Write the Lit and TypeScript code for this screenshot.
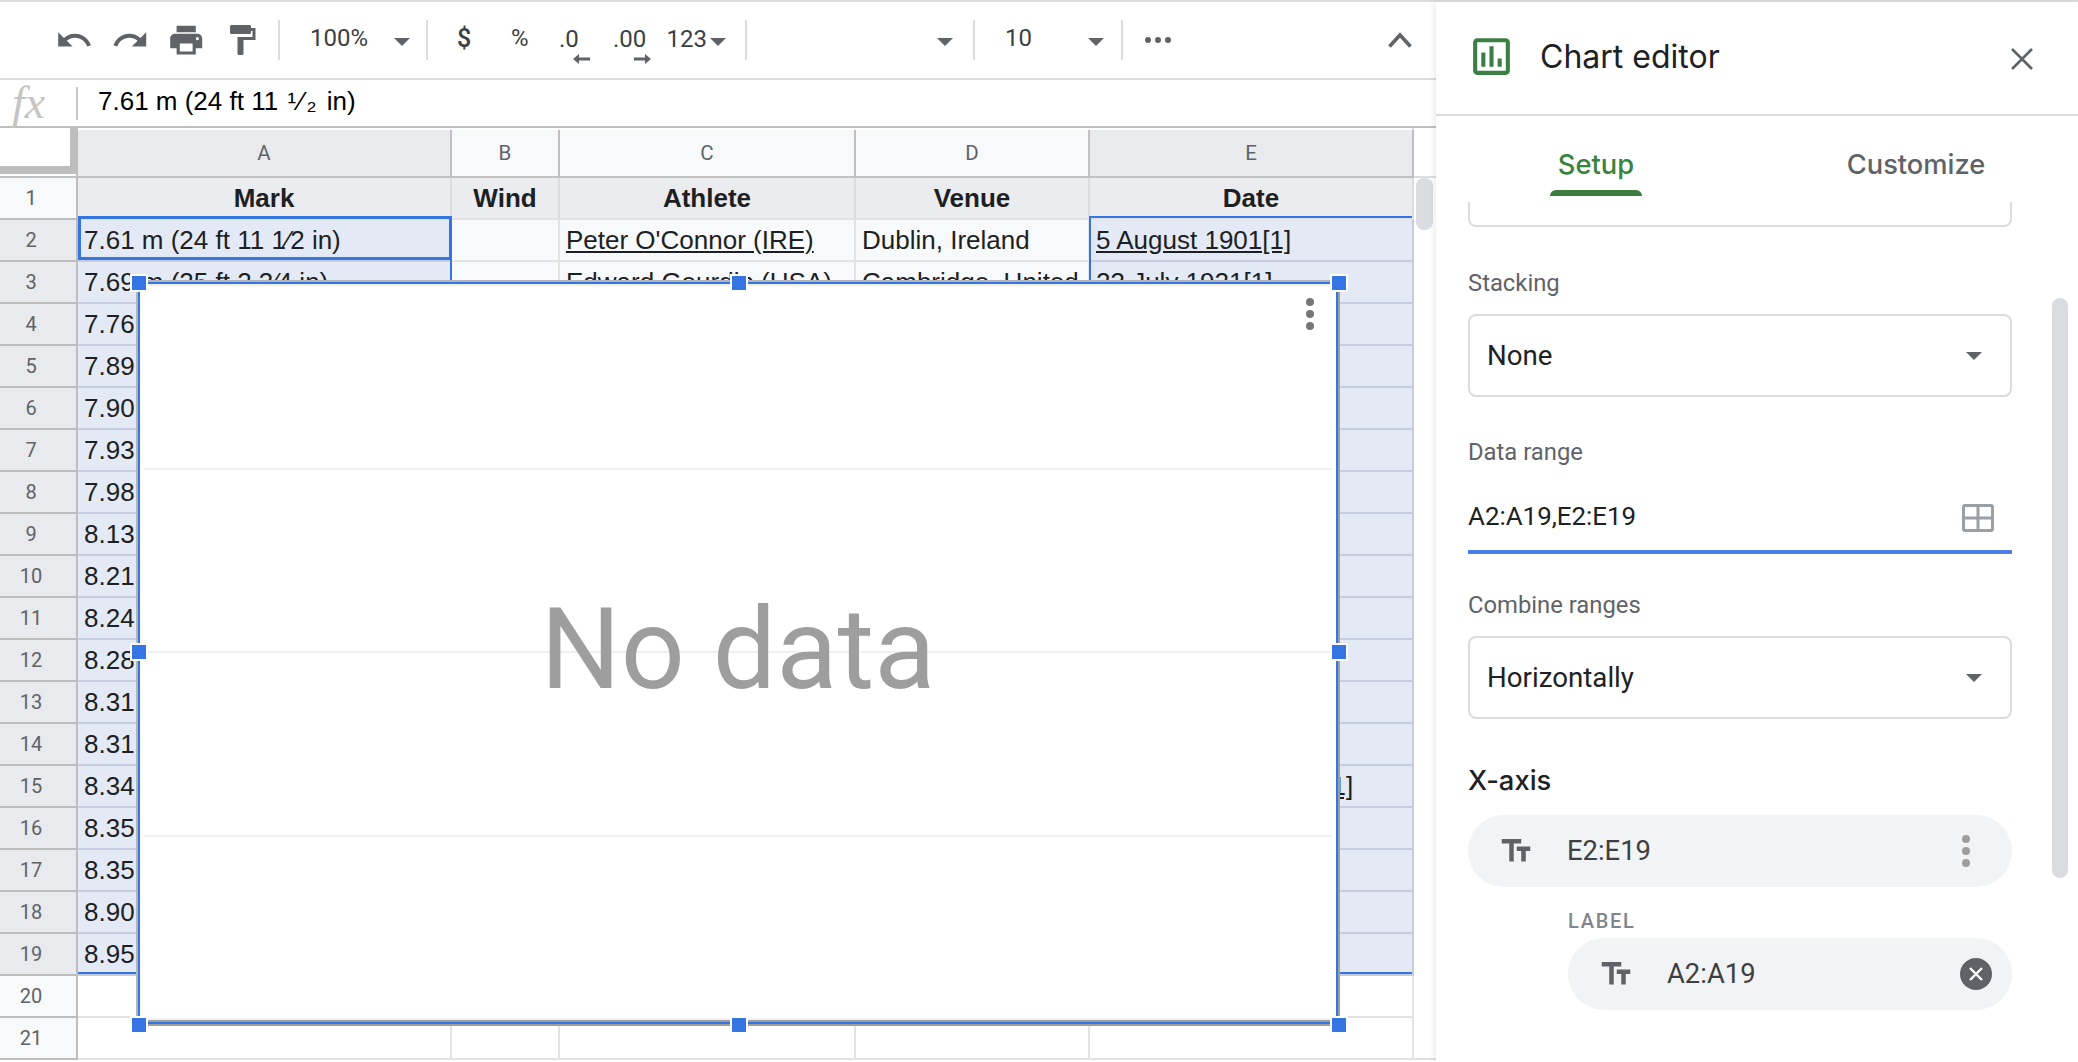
import { LitElement, html, css, svg, unsafeCSS } from "lit";
import { customElement } from "lit/decorators.js";

const BLUE = unsafeCSS("#3574e3");

const marks = [
  "7.61 m (24 ft 11 1⁄2 in)",
  "7.69 m (25 ft 2 3⁄4 in)",
  "7.76", "7.89", "7.90", "7.93", "7.98", "8.13", "8.21", "8.24",
  "8.28", "8.31", "8.31", "8.34", "8.35", "8.35", "8.90", "8.95",
];

const cols = ["A", "B", "C", "D", "E"];

// the cells that the chart does not hide completely, keyed by row number
const extra: Record<number, string[]> = {
  2: ["", "Peter O'Connor (IRE)", "Dublin, Ireland", "5 August 1901[1]"],
  3: ["", "Edward Gourdin (USA)", "Cambridge, United", "23 July 1921[1]"],
  15: ["", "", "", "12 September 1964[1]"],
};

const icon = (size: number, body: unknown) => html`<svg
  class="icon"
  width=${size}
  height=${size}
  viewBox="0 0 24 24"
  fill="currentColor"
>
  ${body}
</svg>`;

const textFields = svg`<path d="M2.5 4v3h5v12h3V7h5V4h-13zm19 5h-9v3h3v7h3v-7h3V9z" />`;

@customElement("sheet-grid")
export class SheetGrid extends LitElement {
  static styles = css`
    :host {
      display: flex;
      flex: 1;
      min-height: 0;
      font-family: "Liberation Sans", Arial, sans-serif;
    }
    .cells {
      position: relative;
      width: 1414px;
      height: 932px;
      display: grid;
      grid-template-columns: 78px 374px 108px 296px 234px 324px;
      grid-template-rows: 50px repeat(21, 42px);
    }
    .cell {
      box-sizing: border-box;
      border-right: 2px solid #e2e3e3;
      border-bottom: 2px solid #e2e3e3;
      font-size: 26px;
      line-height: 41px;
      padding-left: 6px;
      color: #1d1f22;
      white-space: nowrap;
      overflow: hidden;
    }
    .cell.plain {
      background: #f8f9fa;
    }
    .cell.title {
      background: #ebecf0;
      font-weight: 700;
      text-align: center;
      padding-left: 0;
      border-right-color: #dcdde0;
    }
    .cell.sel {
      background: #e3e9f5;
      border-bottom-color: #c6cce0;
      border-right-color: #c6cce0;
    }
    .cell.link {
      text-decoration: underline;
    }
    .corner {
      box-sizing: border-box;
      background: #fff;
      border-bottom: 2px solid #c0c0c0;
      border-right: 2px solid #c0c0c0;
      padding-bottom: 2px;
    }
    .corner div {
      box-sizing: border-box;
      height: 46px;
      margin-right: -2px;
      border-right: 8px solid #bdbdbd;
      border-bottom: 8px solid #bdbdbd;
    }
    .col {
      box-sizing: border-box;
      margin-top: 2px;
      background: #f8f9fa;
      border-right: 2px solid #c0c0c0;
      border-bottom: 2px solid #c0c0c0;
      font: 20.5px Roboto, sans-serif;
      line-height: 46px;
      text-align: center;
      color: #5f6368;
    }
    .col.on {
      background: #e8eaed;
    }
    .rowhead {
      box-sizing: border-box;
      background: #f8f9fa;
      border-right: 2px solid #bdbdbd;
      border-bottom: 2px solid #bdbdbd;
      font: 20px Roboto, sans-serif;
      line-height: 40px;
      text-align: center;
      padding-right: 14px;
      color: #5f6368;
    }
    .rowhead.on {
      background: #e8eaed;
    }
    .range {
      position: absolute;
      box-sizing: border-box;
      pointer-events: none;
    }
    .range-a {
      left: 78px;
      top: 88px;
      width: 374px;
      height: 758px;
      border-right: 2px solid ${BLUE};
      border-bottom: 2px solid ${BLUE};
    }
    .range-active {
      left: 78px;
      top: 88px;
      width: 374px;
      height: 44px;
      border: 3px solid ${BLUE};
    }
    .range-e {
      left: 1089px;
      top: 88px;
      width: 323px;
      height: 758px;
      border-left: 2px solid ${BLUE};
      border-top: 2px solid ${BLUE};
      border-bottom: 2px solid ${BLUE};
    }
    .chart {
      position: absolute;
      left: 136px;
      top: 152px;
      width: 1204px;
      height: 746px;
      box-sizing: border-box;
      border: 2px solid #9e9e9e;
      border-left-color: #b5b5b5;
      border-top-color: #b5b5b5;
    }
    .chart-body {
      position: relative;
      box-sizing: border-box;
      height: 100%;
      background: #fff;
      border: 2px solid ${BLUE};
      display: grid;
      grid-template-rows: repeat(4, 1fr);
      padding: 2px;
      box-shadow: inset 0 2px 0 #edf1ee, inset 0 -2px 0 #9e9e9e;
    }
    .band {
      margin: 0 2px;
      border-bottom: 2px solid #f0f0f0;
    }
    .band:last-of-type {
      border-bottom: none;
    }
    .nodata {
      position: absolute;
      inset: 0 0 8px 0;
      display: flex;
      align-items: center;
      justify-content: center;
      font: 400 112.5px Roboto, sans-serif;
      color: #9e9e9e;
    }
    .chart-menu {
      position: absolute;
      right: 22px;
      top: 14px;
      display: flex;
      flex-direction: column;
      gap: 4px;
    }
    .chart-menu i {
      width: 8px;
      height: 8px;
      border-radius: 50%;
      background: #757575;
    }
    .handle {
      position: absolute;
      width: 14px;
      height: 14px;
      background: ${BLUE};
      outline: 2px solid #fff;
    }
    .hl { left: -6px; }
    .hc { left: 594px; }
    .hr { left: 1194px; }
    .ht { top: -6px; }
    .hm { top: 363px; }
    .hb { top: 736px; }
    .gutter {
      flex: 1;
      height: 932px;
      box-sizing: border-box;
      border-left: 2px solid #dadce0;
      margin-left: -2px;
      border-bottom: 2px solid #e0e0e0;
    }
    .gutter-head {
      height: 48px;
      border-bottom: 2px solid #dadce0;
    }
    .thumb {
      width: 17px;
      height: 52px;
      margin-left: 2px;
      border-radius: 8px;
      background: #dadce0;
    }
  `;

  private renderRow(row: number) {
    const selected = row >= 2 && row <= 19;
    const rest = extra[row] ?? ["", "", "", ""];
    const mark = selected ? marks[row - 2] : "";
    return html`
      <div class="rowhead ${selected ? "on" : ""}">${row}</div>
      <div class="cell ${selected ? "sel" : ""}">${mark}</div>
      ${rest.map((text, i) => {
        const isE = i === 3;
        const cls = [
          selected && isE ? "sel" : selected ? "plain" : "",
          (i === 1 || isE) && text ? "link" : "",
        ].join(" ");
        return html`<div class="cell ${cls}">${text}</div>`;
      })}
    `;
  }

  render() {
    const rows = Array.from({ length: 20 }, (_, i) => i + 2);
    const handles = ["hl ht", "hc ht", "hr ht", "hl hm", "hr hm", "hl hb", "hc hb", "hr hb"];
    return html`
      <div class="cells">
        <div class="corner"><div></div></div>
        ${cols.map(
          (c) => html`<div class="col ${c === "A" || c === "E" ? "on" : ""}">${c}</div>`
        )}
        <div class="rowhead">1</div>
        ${["Mark", "Wind", "Athlete", "Venue", "Date"].map(
          (t) => html`<div class="cell title">${t}</div>`
        )}
        ${rows.map((r) => this.renderRow(r))}

        <div class="range range-a"></div>
        <div class="range range-e"></div>
        <div class="range range-active"></div>

        <div class="chart">
          <div class="chart-body">
            <div class="band"></div>
            <div class="band"></div>
            <div class="band"></div>
            <div class="band"></div>
            <div class="nodata">No data</div>
            <div class="chart-menu"><i></i><i></i><i></i></div>
          </div>
          ${handles.map((h) => html`<div class="handle ${h}"></div>`)}
        </div>
      </div>
      <div class="gutter">
        <div class="gutter-head"></div>
        <div class="thumb"></div>
      </div>
    `;
  }
}

@customElement("chart-editor")
export class ChartEditor extends LitElement {
  static styles = css`
    :host {
      display: flex;
      flex-direction: column;
      position: relative;
      width: 642px;
      background: #fff;
      box-shadow: -2px 0 6px rgba(0, 0, 0, 0.08);
      font-family: Roboto, sans-serif;
      color: #202124;
    }
    .head {
      box-sizing: border-box;
      height: 114px;
      display: flex;
      align-items: center;
      padding: 0 44px 0 31px;
      border-bottom: 2px solid #dadce0;
      flex: none;
    }
    .head .icon {
      color: #3a7f43;
      margin-top: -4px;
    }
    .head h1 {
      flex: 1;
      margin: -3px 0 0 24px;
      font: 400 32px Inter, Roboto, sans-serif;
      color: #202124;
    }
    .close {
      margin-top: 2px;
    }
    .tabs {
      display: flex;
      flex: none;
      height: 86px;
    }
    .tab {
      flex: 1;
      display: flex;
      flex-direction: column;
      align-items: center;
      padding-top: 32px;
      font: 500 27.3px Inter, Roboto, sans-serif;
      line-height: 34px;
      color: #5f6368;
    }
    .tab + .tab {
      padding-right: 2px;
    }
    .tab.on {
      color: #38843f;
    }
    .tab.on::after {
      content: "";
      width: 92px;
      height: 6px;
      margin-top: 8px;
      background: #3c7d3f;
      border-radius: 6px 6px 0 0;
    }
    .scroll {
      position: relative;
      flex: 1;
      overflow: hidden;
      padding: 0 66px 0 32px;
    }
    .stub {
      height: 25px;
      box-sizing: border-box;
      border: 2px solid #dadce0;
      border-top: none;
      border-radius: 0 0 8px 8px;
    }
    .label {
      font-size: 23.8px;
      line-height: 30px;
      color: #5f6368;
    }
    .stacking {
      margin-top: 41px;
    }
    .datarange {
      margin-top: 40px;
    }
    .combine {
      margin-top: 36px;
    }
    .select {
      box-sizing: border-box;
      height: 83px;
      margin-top: 16px;
      display: flex;
      align-items: center;
      justify-content: space-between;
      padding: 0 28px 0 17px;
      border: 2px solid #dadce0;
      border-radius: 8px;
      font-size: 27.7px;
      color: #202124;
    }
    .caret {
      width: 0;
      height: 0;
      border-left: 8px solid transparent;
      border-right: 8px solid transparent;
      border-top: 8px solid #5f6368;
    }
    .range {
      box-sizing: border-box;
      height: 87px;
      padding: 29px 18px 0 0;
      display: flex;
      justify-content: space-between;
      border-bottom: 4px solid #4a80e6;
      font-size: 25.9px;
      line-height: 40px;
      color: #202124;
    }
    .range svg {
      margin-top: 8px;
    }
    h2 {
      margin: 46px 0 0;
      font: 500 27.4px Inter, Roboto, sans-serif;
      line-height: 30px;
      color: #202124;
    }
    .chip {
      box-sizing: border-box;
      height: 72px;
      display: flex;
      align-items: center;
      padding: 0 20px 0 30px;
      border-radius: 36px;
      background: #f1f3f4;
      font-size: 27.4px;
      color: #3c4043;
    }
    .chip .icon {
      color: #5f6368;
      margin-right: 33px;
    }
    .chip span {
      flex: 1;
    }
    .first {
      margin-top: 20px;
    }
    .second {
      margin: 7px 0 0 100px;
    }
    .cap {
      margin: 24px 0 0 100px;
      font: 500 20px Roboto, sans-serif;
      line-height: 20px;
      letter-spacing: 1.7px;
      color: #80868b;
    }
    .kebab {
      display: flex;
      flex-direction: column;
      gap: 4px;
      margin-right: 22px;
    }
    .kebab i {
      width: 8px;
      height: 8px;
      border-radius: 50%;
      background: #9e9e9e;
    }
    .bar {
      position: absolute;
      left: 616px;
      top: 96px;
      width: 16px;
      height: 580px;
      border-radius: 8px;
      background: #dadce0;
    }
  `;

  render() {
    return html`
      <div class="head">
        ${icon(
          49,
          svg`<path d="M9 17H7v-7h2v7zm4 0h-2V7h2v10zm4 0h-2v-4h2v4zm2 2H5V5h14v14zm0-16H5c-1.1 0-2 .9-2 2v14c0 1.1.9 2 2 2h14c1.1 0 2-.9 2-2V5c0-1.1-.9-2-2-2z" />`
        )}
        <h1>Chart editor</h1>
        <svg class="close" width="24" height="24" viewBox="0 0 24 24" fill="none" stroke="#5f6368" stroke-width="2.6">
          <path d="M2 2l20 20M22 2L2 22" />
        </svg>
      </div>
      <div class="tabs">
        <div class="tab on">Setup</div>
        <div class="tab">Customize</div>
      </div>
      <div class="scroll">
        <div class="stub"></div>
        <div class="label stacking">Stacking</div>
        <div class="select">None<div class="caret"></div></div>
        <div class="label datarange">Data range</div>
        <div class="range">
          A2:A19,E2:E19
          <svg width="32" height="28" viewBox="0 0 32 28" fill="none" stroke="#9aa0a6" stroke-width="3">
            <rect x="1.5" y="1.5" width="29" height="25" rx="1.5" />
            <path d="M16 1.5v25M1.5 14h29" />
          </svg>
        </div>
        <div class="label combine">Combine ranges</div>
        <div class="select">Horizontally<div class="caret"></div></div>
        <h2>X-axis</h2>
        <div class="chip first">
          ${icon(36, textFields)}
          <span>E2:E19</span>
          <div class="kebab"><i></i><i></i><i></i></div>
        </div>
        <div class="cap">LABEL</div>
        <div class="chip second">
          ${icon(36, textFields)}
          <span>A2:A19</span>
          <svg width="32" height="32" viewBox="0 0 32 32">
            <circle cx="16" cy="16" r="16" fill="#5f6368" />
            <path d="M10 10l12 12M22 10L10 22" stroke="#fff" stroke-width="2.4" />
          </svg>
        </div>
        <div class="bar"></div>
      </div>
    `;
  }
}

@customElement("app-root")
export class AppRoot extends LitElement {
  static styles = css`
    :host {
      display: block;
      width: 2078px;
      height: 1062px;
      overflow: hidden;
      background: #fff;
    }
    .app {
      box-sizing: border-box;
      height: 1062px;
      display: flex;
      border-top: 2px solid #dadce0;
    }
    .sheet {
      width: 1436px;
      display: flex;
      flex-direction: column;
    }
    .toolbar {
      box-sizing: border-box;
      height: 78px;
      flex: none;
      display: grid;
      grid-template-columns: 56px 56px 57px 54px 2px 114px 32px 2px 83px 48px 54px 53.5px 43.5px 35px 2px 190px 36px 2px 113px 33px 2px 1fr 48px;
      align-items: center;
      padding-left: 55px;
      border-bottom: 2px solid #dadce0;
      font: 24px Roboto, sans-serif;
      color: #3c4043;
    }
    .toolbar .icon {
      color: #5f6368;
      display: block;
    }
    .sep {
      width: 2px;
      height: 40px;
      background: #dadce0;
    }
    .pad {
      padding-left: 30px;
      margin-top: -4px;
    }
    .dollar {
      padding-left: 29px;
      font-weight: 500;
      font-size: 25px;
      margin-top: -4px;
    }
    .pct {
      margin-top: -4px;
    }
    .caret {
      width: 0;
      height: 0;
      margin-top: 3px;
      border-left: 8px solid transparent;
      border-right: 8px solid transparent;
      border-top: 8px solid #5f6368;
    }
    .dec {
      position: relative;
      margin-top: -2px;
    }
    .dec svg {
      position: absolute;
      top: 29px;
    }
    .dec.less svg {
      left: 14px;
    }
    .dec.more svg {
      left: 21px;
    }
    .dots {
      display: flex;
      gap: 4px;
      padding-left: 22px;
    }
    .dots i {
      width: 6px;
      height: 6px;
      border-radius: 50%;
      background: #5f6368;
    }
    .formula {
      box-sizing: border-box;
      height: 48px;
      flex: none;
      display: flex;
      align-items: center;
      border-bottom: 2px solid #c0c0c0;
      font: 26px "Liberation Sans", Arial, sans-serif;
      color: #000;
      white-space: pre;
    }
    .formula-text {
      margin-top: -3px;
    }
    .fx {
      width: 76px;
      padding-left: 12px;
      box-sizing: border-box;
      font: italic 46px "Liberation Serif", serif;
      line-height: 44px;
      color: #c4c4c4;
    }
    .formula .rule {
      width: 2px;
      height: 33px;
      background: #c8c8c8;
      margin-right: 20px;
    }
    .frac {
      letter-spacing: 3px;
      margin-left: 2px;
    }
  `;

  render() {
    return html`
      <div class="app">
        <div class="sheet">
          <div class="toolbar">
            ${icon(
              38.4,
              svg`<path d="M12.5 8c-2.65 0-5.05.99-6.9 2.6L2 7v9h9l-3.62-3.62c1.39-1.16 3.16-1.88 5.12-1.88 3.54 0 6.55 2.31 7.6 5.5l2.37-.78C21.08 11.03 17.15 8 12.5 8z" />`
            )}
            ${icon(
              38.4,
              svg`<path d="M18.4 10.6C16.55 8.99 14.15 8 11.5 8c-4.65 0-8.58 3.03-9.96 7.22L3.9 16c1.05-3.19 4.05-5.5 7.6-5.5 1.95 0 3.73.72 5.12 1.88L13 16h9V7l-3.6 3.6z" />`
            )}
            ${icon(
              38.4,
              svg`<path d="M19 8H5c-1.66 0-3 1.34-3 3v6h4v4h12v-4h4v-6c0-1.66-1.34-3-3-3zm-3 11H8v-5h8v5zm3-7c-.55 0-1-.45-1-1s.45-1 1-1 1 .45 1 1-.45 1-1 1zm-1-9H6v4h12V3z" />`
            )}
            ${icon(
              36,
              svg`<path d="M18 4V3c0-.55-.45-1-1-1H5c-.55 0-1 .45-1 1v4c0 .55.45 1 1 1h12c.55 0 1-.45 1-1V6h1v4H9v11c0 .55.45 1 1 1h2c.55 0 1-.45 1-1v-9h8V4h-3z" />`
            )}
            <div class="sep"></div>
            <div class="pad">100%</div>
            <div class="caret"></div>
            <div class="sep"></div>
            <div class="dollar">$</div>
            <div class="pct">%</div>
            <div class="dec less">
              .0
              <svg width="17" height="10" viewBox="0 0 17 10" fill="#5f6368"><path d="M0 5l6-5v3.4h11v3.2H6V10z" /></svg>
            </div>
            <div class="dec more">
              .00
              <svg width="17" height="10" viewBox="0 0 17 10" fill="#5f6368"><path d="M17 5l-6-5v3.4H0v3.2h11V10z" /></svg>
            </div>
            <div class="dec">123</div>
            <div class="caret"></div>
            <div class="sep"></div>
            <div></div>
            <div class="caret"></div>
            <div class="sep"></div>
            <div class="pad">10</div>
            <div class="caret"></div>
            <div class="sep"></div>
            <div class="dots"><i></i><i></i><i></i></div>
            <svg width="24" height="16" viewBox="0 0 24 16" fill="none" stroke="#5f6368" stroke-width="3.6">
              <path d="M1.5 14.5L12 3l10.5 11.5" />
            </svg>
          </div>
          <div class="formula">
            <div class="fx">fx</div>
            <div class="rule"></div>
            <span class="formula-text">7.61 m (24 ft 11 <span class="frac">¹⁄₂</span> in)</span>
          </div>
          <sheet-grid></sheet-grid>
        </div>
        <chart-editor></chart-editor>
      </div>
    `;
  }
}
